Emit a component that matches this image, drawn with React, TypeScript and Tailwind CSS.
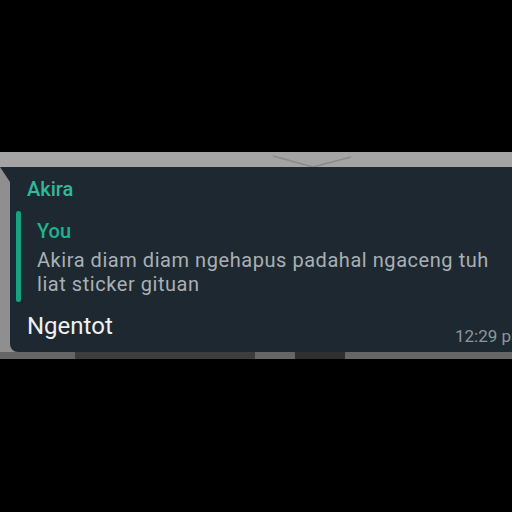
export default function App() {
  return (
    <div className="w-[512px] h-[512px] bg-black overflow-hidden flex flex-col font-['Roboto',sans-serif]">
      <div className="h-[152px] shrink-0" />
      <div className="shrink-0 bg-[#8f8f8f] flex flex-col">
        {/* top band of the wallpaper */}
        <div className="h-[15px] bg-[#a4a4a4] flex justify-center">
          <svg width="120" height="15" viewBox="0 0 120 15" className="ml-[110px]">
            <path d="M22 4 L62 15 L100 5" stroke="#8a8a8a" strokeWidth="1.5" fill="none" />
          </svg>
        </div>

        <div className="flex">
          <div className="w-[10px] shrink-0" />
          <div className="relative w-[525px] shrink-0 bg-[#1e2830] rounded-b-lg rounded-tr-lg pl-[6px] pr-[9px] pt-[10px] pb-[12px]">
            {/* bubble tail */}
            <svg width="10" height="15" viewBox="0 0 10 15" className="absolute -left-[10px] top-0">
              <polygon points="0,0 10,0 10,15" fill="#1e2830" />
            </svg>

            <div className="pl-[11px] text-[20px] leading-[24px] font-medium text-[#2dbb9a]">Akira</div>

            <div className="mt-[10px] flex">
              <div className="w-[5px] rounded-sm bg-[#17a37f] shrink-0" />
              <div className="pl-[16px] pt-[8px] pb-[6px]">
                <div className="text-[20px] leading-[24px] font-medium text-[#20b18d]">You</div>
                <div className="mt-[5px] text-[20px] leading-[24px] tracking-[0.55px] text-[#a9b0b5]">
                  Akira diam diam ngehapus padahal ngaceng tuh
                  <br />
                  liat sticker gituan
                </div>
              </div>
            </div>

            <div className="mt-[10px] flex items-end">
              <div className="pl-[11px] text-[24px] leading-[28px] text-[#eef0f1]">Ngentot</div>
              <div className="ml-auto -mb-[6px] text-[17px] leading-[20px] text-[#8d969c]">12:29 pm</div>
            </div>
          </div>
        </div>

        <div className="h-[7px] bg-[#666666] flex">
          <div className="w-[75px]" />
          <div className="w-[180px] bg-[#3d3d3d]" />
          <div className="w-[40px]" />
          <div className="w-[50px] bg-[#2f2f2f]" />
        </div>
      </div>
    </div>
  );
}
